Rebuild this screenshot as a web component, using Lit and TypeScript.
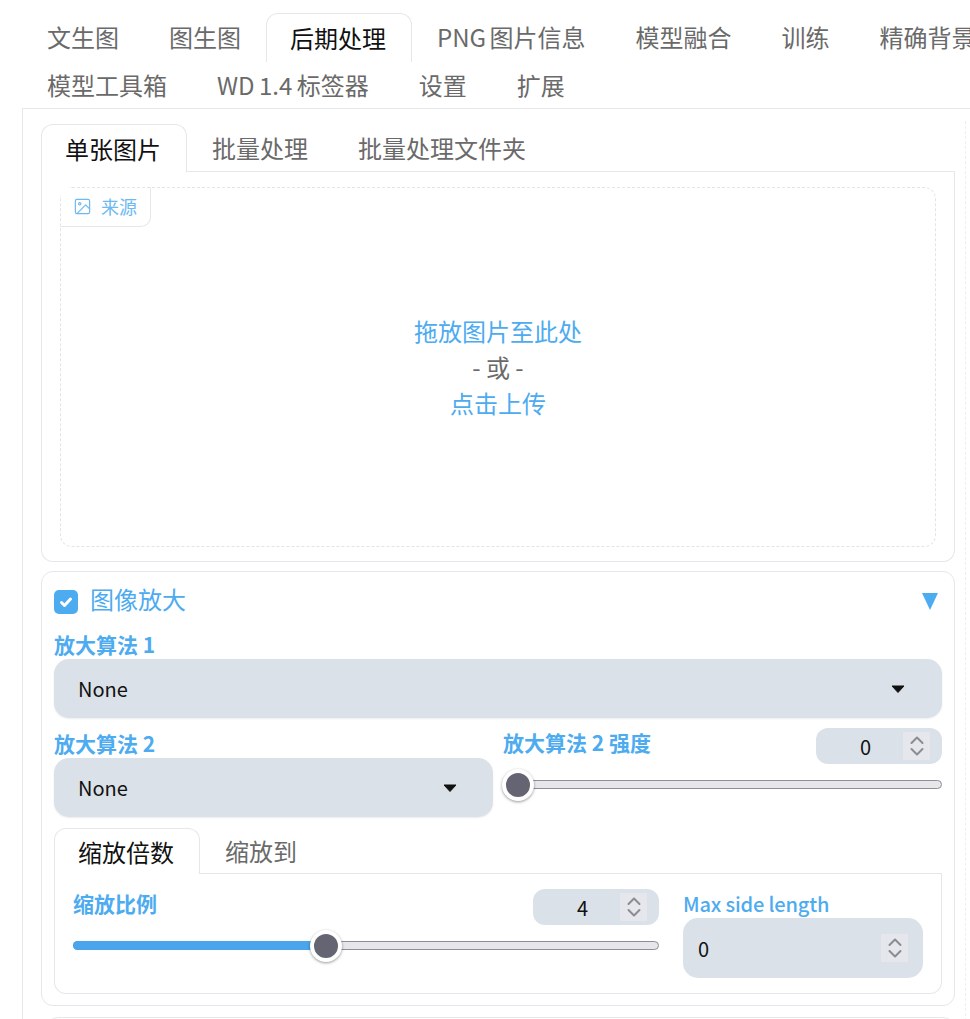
import { LitElement, html, css, svg } from "lit";
import { customElement } from "lit/decorators.js";

const spinner = html`<span class="spin"><svg width="18" height="24" viewBox="0 0 18 24" fill="none" stroke="#8b8b93" stroke-width="2" stroke-linecap="round" stroke-linejoin="round">${svg`<path d="M3.5 9 L9 3.5 L14.5 9"/><path d="M3.5 15 L9 20.5 L14.5 15"/>`}</svg></span>`;
const caret = html`<svg class="caret" width="14" height="8" viewBox="0 0 14 8">${svg`<path d="M1 1 H13 L7 7.5 Z" fill="#111" stroke="#111" stroke-width="1" stroke-linejoin="round"/>`}</svg>`;

@customElement("app-root")
export class AppRoot extends LitElement {
  static styles = css`
    :host {
      display: block;
      width: 970px;
      height: 1019px;
      overflow: hidden;
      background: #fff;
      font-family: "Noto Sans CJK SC", "Noto Sans", sans-serif;
      color: #111;
    }
    .top { padding: 13px 0 0 22px; }
    .row { display: flex; white-space: nowrap; }
    .row.r1 { height: 49px; }
    .row.r2 { height: 46px; }
    .tab {
      font-size: 24px;
      line-height: 47px;
      padding: 0 25px;
      color: #6a6a6a;
      box-sizing: border-box;
      flex: none;
    }
    .tab.png { word-spacing: -2px; }
    .tab.wd { word-spacing: -1px; }
    .r2 .tab { line-height: 46px; }
    .tab.on {
      color: #111;
      border: 1px solid #e5e7eb;
      border-bottom: none;
      border-radius: 12px 12px 0 0;
      background: #fff;
      padding: 0 25px 0 23px;
      line-height: 47px;
    }
    .main {
      display: flex;
      border-top: 1px solid #e5e7eb;
      border-left: 1px solid #e5e7eb;
      padding: 15px 0 0 18px;
    }
    .col { width: 914px; flex: none; }
    .side { width: 4px; margin: -3px 0 0 10px; border-left: 1px dashed #eceef1; height: 900px; }
    .tabnav { display: flex; height: 48px; position: relative; }
    .tabnav::after { content: ""; flex: 1; border-bottom: 1px solid #e5e7eb; }
    .tabnav .tab { height: 48px; line-height: 48px; }
    .tabnav .tab:not(.on) { border-bottom: 1px solid #e5e7eb; }
    .upload {
      border: 1px solid #e5e7eb;
      border-top: none;
      border-radius: 0 0 12px 12px;
      padding: 15px 18px 14px;
    }
    .drop {
      position: relative;
      height: 360px;
      box-sizing: border-box;
      border: 1px dashed #e2e4e9;
      border-radius: 12px;
      display: flex;
      flex-direction: column;
      align-items: center;
      justify-content: center;
      font-size: 24px;
      line-height: 36px;
      color: #6a6a6a;
    }
    .drop .l { color: #4dabf0; }
    .badge {
      position: absolute;
      left: -1px;
      top: -1px;
      width: 91px;
      height: 40px;
      box-sizing: border-box;
      border: 1px solid #e5e7eb;
      border-top-color: transparent;
      border-left-color: transparent;
      border-radius: 0 0 10px 0;
      background: #fff;
      background-clip: padding-box;
      display: flex;
      align-items: center;
      padding: 0 0 2px 12px;
      gap: 9px;
      color: #6db9f2;
      font-size: 18px;
      line-height: 26px;
    }
    .panel {
      margin-top: 9px;
      border: 1px solid #e5e7eb;
      border-radius: 12px;
      padding: 12px;
      box-sizing: border-box;
      height: 435px;
    }
    .head {
      display: flex;
      align-items: center;
      height: 36px;
      margin-bottom: 11px;
      font-size: 24px;
      color: #4dabf0;
    }
    .check {
      width: 24px;
      height: 24px;
      border-radius: 5px;
      background: #4dabf0;
      display: flex;
      align-items: center;
      justify-content: center;
      margin-right: 12px;
    }
    .head .tname { flex: 1; line-height: 30px; padding-bottom: 6px; }
    .tri { margin: 0 4px 2px 0; }
    .lab {
      display: block;
      font-size: 21px;
      line-height: 26px;
      padding-bottom: 2px;
      font-weight: 700;
      color: #4dabf0;
    }
    .lab.second { margin-top: 2px; }
    .sel {
      height: 59px;
      box-sizing: border-box;
      background: #dbe1e8;
      border-radius: 15px;
      box-shadow: 0 1px 2px rgba(0, 0, 0, 0.08);
      display: flex;
      align-items: center;
      justify-content: space-between;
      padding: 0 37px 0 24px;
      font-size: 20px;
      color: #111;
    }
    .sel.half { padding-right: 36px; }
    .two {
      display: grid;
      grid-template-columns: 439px 439px;
      gap: 10px;
      margin-top: 10px;
    }
    .sl-head { display: flex; justify-content: space-between; align-items: flex-start; height: 36px; }
    .sl-head .lab { margin-top: 1px; }
    .num {
      width: 126px;
      height: 36px;
      box-sizing: border-box;
      background: #dbe1e8;
      border-radius: 12px;
      display: flex;
      align-items: center;
      padding-right: 12px;
      font-size: 20px;
      color: #111;
    }
    .num .v { flex: 1; text-align: center; padding-left: 12px; }
    .spin {
      width: 27px;
      height: 28px;
      background: #e5e7ec;
      display: flex;
      align-items: center;
      justify-content: center;
      flex: none;
    }
    .track {
      position: relative;
      margin-top: 16px;
      height: 9px;
      box-sizing: border-box;
      border: 1px solid #8e8e96;
      border-radius: 5px;
      background: #e6e6eb;
    }
    .fill {
      position: absolute;
      left: -1px;
      top: -1px;
      bottom: -1px;
      background: #4ba5ea;
      border-radius: 5px 0 0 5px;
    }
    .thumb {
      position: absolute;
      top: 50%;
      width: 32px;
      height: 32px;
      box-sizing: border-box;
      margin: -16px 0 0 -16px;
      border: 4px solid #fff;
      border-radius: 50%;
      background: #646473;
      box-shadow: 0 1px 3px rgba(0, 0, 0, 0.4);
    }
    .sub { margin-top: 11px; }
    .sub .tabnav { height: 46px; }
    .sub .tabnav .tab { height: 46px; line-height: 45px; }
    .subbody {
      height: 120px;
      box-sizing: border-box;
      border: 1px solid #e5e7eb;
      border-top: none;
      border-radius: 0 0 12px 12px;
      padding: 15px 18px 0;
      display: grid;
      grid-template-columns: 586px 240px;
      gap: 24px;
    }
    .mx .lab {
      font-size: 20px;
      font-weight: 500;
      letter-spacing: -0.15px;
      line-height: 28px;
      padding: 0;
      margin: 1px 0 0;
    }
    .mx .big {
      height: 60px;
      box-sizing: border-box;
      background: #dbe1e8;
      border-radius: 15px;
      display: flex;
      align-items: center;
      justify-content: space-between;
      padding: 0 15px;
      font-size: 20px;
      color: #111;
    }
    .next {
      margin: 11px 0 0 5px;
      height: 40px;
      border: 1px solid #e5e7eb;
      border-radius: 12px;
    }
  `;

  render() {
    return html`
      <div class="top">
        <div class="row r1">
          <span class="tab">文生图</span>
          <span class="tab">图生图</span>
          <span class="tab on">后期处理</span>
          <span class="tab png">PNG 图片信息</span>
          <span class="tab">模型融合</span>
          <span class="tab">训练</span>
          <span class="tab">精确背景去除</span>
        </div>
        <div class="row r2">
          <span class="tab">模型工具箱</span>
          <span class="tab wd">WD 1.4 标签器</span>
          <span class="tab">设置</span>
          <span class="tab">扩展</span>
        </div>
        <div class="main">
          <div class="col">
            <div class="tabnav">
              <span class="tab on">单张图片</span>
              <span class="tab">批量处理</span>
              <span class="tab">批量处理文件夹</span>
            </div>
            <div class="upload">
              <div class="drop">
                <div class="badge">
                  <svg width="19" height="19" viewBox="0 0 24 24" fill="none" stroke="#6db9f2" stroke-width="1.5" stroke-linecap="round" stroke-linejoin="round">
                    ${svg`<rect x="3" y="3" width="18" height="18" rx="2"/><circle cx="8.5" cy="8.5" r="1.5"/><polyline points="21 15 16 10 5 21"/>`}
                  </svg>
                  <span>来源</span>
                </div>
                <span class="l">拖放图片至此处</span>
                <span>- 或 -</span>
                <span class="l">点击上传</span>
              </div>
            </div>
            <div class="panel">
              <div class="head">
                <span class="check">
                  <svg width="16" height="16" viewBox="0 0 16 16" fill="none" stroke="#fff" stroke-width="3" stroke-linecap="round" stroke-linejoin="round">${svg`<path d="M3.5 8.5 L6.5 11.5 L12.5 5"/>`}</svg>
                </span>
                <span class="tname">图像放大</span>
                <svg class="tri" width="16" height="17" viewBox="0 0 16 17">${svg`<path d="M0 0 H16 L8 17 Z" fill="#4dabf0"/>`}</svg>
              </div>
              <span class="lab">放大算法 1</span>
              <div class="sel"><span>None</span>${caret}</div>
              <div class="two">
                <div>
                  <span class="lab second">放大算法 2</span>
                  <div class="sel half"><span>None</span>${caret}</div>
                </div>
                <div>
                  <div class="sl-head">
                    <span class="lab">放大算法 2 强度</span>
                    <div class="num"><span class="v">0</span>${spinner}</div>
                  </div>
                  <div class="track"><span class="thumb" style="left:14px"></span></div>
                </div>
              </div>
              <div class="sub">
                <div class="tabnav">
                  <span class="tab on">缩放倍数</span>
                  <span class="tab">缩放到</span>
                </div>
                <div class="subbody">
                  <div>
                    <div class="sl-head">
                      <span class="lab">缩放比例</span>
                      <div class="num"><span class="v">4</span>${spinner}</div>
                    </div>
                    <div class="track">
                      <span class="fill" style="width:253px"></span>
                      <span class="thumb" style="left:252px"></span>
                    </div>
                  </div>
                  <div class="mx">
                    <span class="lab">Max side length</span>
                    <div class="big"><span>0</span>${spinner}</div>
                  </div>
                </div>
              </div>
            </div>
            <div class="next"></div>
          </div>
          <div class="side"></div>
        </div>
      </div>
    `;
  }
}
